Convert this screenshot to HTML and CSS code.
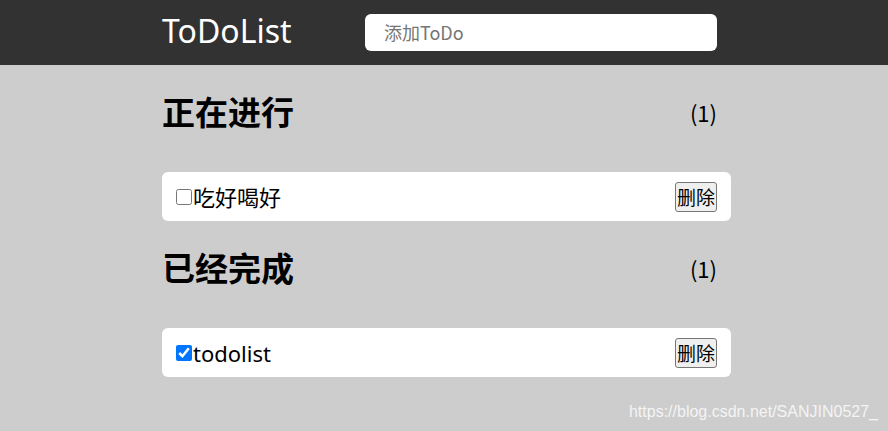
FILE: index.html
```html
<!DOCTYPE html>
<html lang="zh">
<head>
<meta charset="utf-8">
<title>ToDoList</title>
<link rel="stylesheet" href="styles.css">
</head>
<body>
<header class="header">
  <div class="wrap header-inner">
    <span class="logo">ToDoList</span>
    <input class="add-input" type="text" placeholder="添加ToDo">
  </div>
</header>
<main class="wrap main">
  <section class="group">
    <h2 class="group-title"><span class="title-text">正在进行</span><span class="count">(1)</span></h2>
    <ul class="list">
      <li class="item"><input class="check" type="checkbox"><span class="item-text">吃好喝好</span><button class="del">删除</button></li>
    </ul>
  </section>
  <section class="group">
    <h2 class="group-title"><span class="title-text">已经完成</span><span class="count">(1)</span></h2>
    <ul class="list">
      <li class="item"><input class="check" type="checkbox" checked><span class="item-text">todolist</span><button class="del">删除</button></li>
    </ul>
  </section>
</main>
<div class="watermark">https://blog.csdn.net/SANJIN0527_</div>
</body>
</html>
```
FILE: styles.css
```css
html, body {
  margin: 0;
  padding: 0;
}
body {
  background: #cdcdcd;
  font-family: "Noto Sans", "Noto Sans CJK SC", sans-serif;
  color: #000;
  padding-left: 5px;
  height: 431px;
  overflow: hidden;
  position: relative;
}
.header {
  background: #323232;
  height: 65px;
  margin-left: -5px;
  padding-left: 5px;
}
.wrap {
  width: 569px;
  margin: 0 auto;
  box-sizing: border-box;
}
.header-inner {
  height: 65px;
  display: flex;
  align-items: center;
  justify-content: space-between;
  padding-right: 14px;
}
.logo {
  color: #fff;
  font-size: 32px;
  line-height: 40px;
  margin-top: -4px;
}
.add-input {
  width: 352px;
  height: 37px;
  box-sizing: border-box;
  border: none;
  outline: none;
  border-radius: 6px;
  background: #fff;
  padding: 0 0 0 19px;
  font-size: 18px;
  font-family: "Noto Sans CJK SC", sans-serif;
  margin-top: -1px;
}
.add-input::placeholder {
  color: #757575;
}
.main {
  padding-top: 26px;
}
.group-title {
  margin: 0 0 41px;
  height: 40px;
  display: flex;
  align-items: center;
  justify-content: space-between;
  padding-right: 14px;
}
.title-text {
  font-family: "Noto Sans CJK SC", sans-serif;
  font-weight: 700;
  font-size: 33px;
  line-height: 40px;
}
.count {
  font-weight: 400;
  font-size: 22px;
  font-family: "Noto Sans CJK SC", sans-serif;
  margin-top: 2px;
}
.list {
  list-style: none;
  margin: 0 0 26px;
  padding: 0;
}
.item {
  height: 49px;
  background: #fff;
  border-radius: 6px;
  display: flex;
  align-items: center;
  padding: 0 14px;
}
.check {
  width: 16px;
  height: 16px;
  margin: 0 1px 0 0;
}
.item-text {
  flex: 1;
  font-size: 22px;
  font-family: "Noto Sans", "Noto Sans CJK SC", sans-serif;
  line-height: 30px;
}
.del {
  height: 30px;
  padding: 0 1px;
  font-size: 19px;
  font-family: "Noto Sans CJK SC", sans-serif;
  background: #efefef;
  border: 1px solid #767676;
  border-radius: 3px;
  color: #000;
  line-height: 26px;
}
.watermark {
  position: absolute;
  right: 10px;
  bottom: 10px;
  font-family: "Liberation Sans", Arial, sans-serif;
  font-size: 16px;
  color: rgba(255, 255, 255, 0.8);
}
```
